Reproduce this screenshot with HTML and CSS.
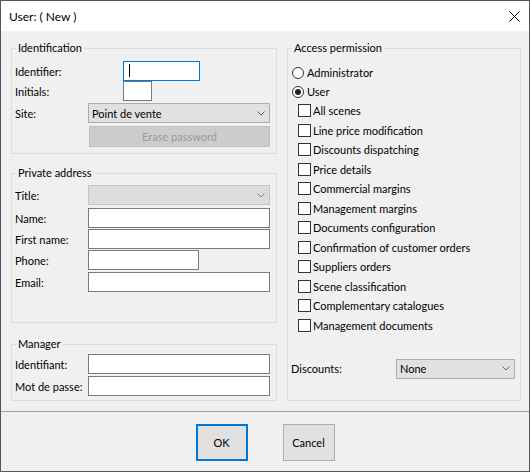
FILE: index.html
```html
<!DOCTYPE html>
<html lang="en">
<head>
<meta charset="utf-8">
<title>User: ( New )</title>
<link rel="stylesheet" href="styles.css">
</head>
<body>
<div class="window">
  <div class="titlebar">
    <span class="title">User: ( New )</span>
    <svg class="close" viewBox="0 0 11 11" aria-label="Close"><path d="M0.5 0.5 L10.5 10.5 M10.5 0.5 L0.5 10.5" stroke="#000" stroke-width="1" fill="none"/></svg>
  </div>

  <div class="content">
    <div class="left-col">
      <fieldset class="group g-ident">
        <legend>Identification</legend>
        <div class="row">
          <span class="lbl">Identifier:</span>
          <div class="textbox focused w-ident indent"><span class="caret"></span></div>
        </div>
        <div class="row">
          <span class="lbl">Initials:</span>
          <div class="textbox w-init indent"></div>
        </div>
        <div class="row mt2">
          <span class="lbl">Site:</span>
          <div class="combo w-full"><span>Point de vente</span><svg class="chev" viewBox="0 0 8 5"><path d="M0.5 0.5 L4 4 L7.5 0.5" stroke="#606060" fill="none"/></svg></div>
        </div>
        <div class="row h21 mt3">
          <div class="btn-disabled">Erase password</div>
        </div>
      </fieldset>

      <fieldset class="group g-addr">
        <legend>Private address</legend>
        <div class="row">
          <span class="lbl">Title:</span>
          <div class="combo disabled w-full"><span></span><svg class="chev" viewBox="0 0 8 5"><path d="M0.5 0.5 L4 4 L7.5 0.5" stroke="#8a8a8a" fill="none"/></svg></div>
        </div>
        <div class="row mt3">
          <span class="lbl">Name:</span>
          <div class="textbox w-full"></div>
        </div>
        <div class="row mt1">
          <span class="lbl">First name:</span>
          <div class="textbox w-full"></div>
        </div>
        <div class="row mt1">
          <span class="lbl">Phone:</span>
          <div class="textbox w-phone"></div>
        </div>
        <div class="row mt2">
          <span class="lbl">Email:</span>
          <div class="textbox w-full"></div>
        </div>
      </fieldset>

      <fieldset class="group g-mgr">
        <legend>Manager</legend>
        <div class="row">
          <span class="lbl">Identifiant:</span>
          <div class="textbox w-full"></div>
        </div>
        <div class="row mt2">
          <span class="lbl">Mot de passe:</span>
          <div class="textbox w-full"></div>
        </div>
      </fieldset>
    </div>

    <fieldset class="group g-access">
      <legend>Access permission</legend>
      <div class="radio-row"><span class="radio"></span><span>Administrator</span></div>
      <div class="radio-row"><span class="radio checked"><span class="dot"></span></span><span>User</span></div>
      <div class="checks">
        <div class="check-row"><span class="check"></span><span>All scenes</span></div>
        <div class="check-row"><span class="check"></span><span>Line price modification</span></div>
        <div class="check-row"><span class="check"></span><span>Discounts dispatching</span></div>
        <div class="check-row"><span class="check"></span><span>Price details</span></div>
        <div class="check-row"><span class="check"></span><span>Commercial margins</span></div>
        <div class="check-row"><span class="check"></span><span>Management margins</span></div>
        <div class="check-row"><span class="check"></span><span>Documents configuration</span></div>
        <div class="check-row"><span class="check"></span><span>Confirmation of customer orders</span></div>
        <div class="check-row"><span class="check"></span><span>Suppliers orders</span></div>
        <div class="check-row"><span class="check"></span><span>Scene classification</span></div>
        <div class="check-row"><span class="check"></span><span>Complementary catalogues</span></div>
        <div class="check-row"><span class="check"></span><span>Management documents</span></div>
      </div>
      <div class="disc-row">
        <span class="disc-lbl">Discounts:</span>
        <div class="combo w-disc"><span>None</span><svg class="chev" viewBox="0 0 8 5"><path d="M0.5 0.5 L4 4 L7.5 0.5" stroke="#606060" fill="none"/></svg></div>
      </div>
    </fieldset>
  </div>

  <div class="footer">
    <div class="btn default">OK</div>
    <div class="btn">Cancel</div>
  </div>
</div>
</body>
</html>
```
FILE: styles.css
```css
* { box-sizing: border-box; }
html, body { margin: 0; padding: 0; }
body {
  width: 530px;
  height: 472px;
  overflow: hidden;
  font-family: Lato, "Liberation Sans", sans-serif;
  font-size: 11px;
  color: #000;
  background: #f0f0f0;
}

.window {
  width: 530px;
  height: 472px;
  border: 1px solid #555;
  background: #f0f0f0;
  display: flex;
  flex-direction: column;
}

.titlebar {
  flex: none;
  height: 30px;
  background: #fff;
  display: flex;
  align-items: center;
  justify-content: space-between;
  padding: 0 9px 0 8px;
}
.title { font-size: 12px; }
.close { width: 11px; height: 11px; display: block; }

.content {
  flex: none;
  display: flex;
  align-items: stretch;
  gap: 10px;
  padding: 10px 0 0 10px;
}

.left-col {
  width: 266px;
  display: flex;
  flex-direction: column;
}

.group {
  margin: 0;
  border: 1px solid #dcdcdc;
  padding: 0 3px;
  min-width: 0;
}
.group legend {
  font-size: 11px;
  line-height: 14px;
  padding: 0 2px;
  margin-left: 1px;
}

.g-ident { padding-top: 6px; padding-bottom: 6px; }
.g-addr { margin-top: 12px; padding-top: 5px; padding-bottom: 30px; }
.g-mgr { margin-top: 14px; padding-top: 3px; padding-bottom: 4px; }
.g-access { width: 234px; padding-top: 8px; }

.row {
  display: flex;
  align-items: center;
  height: 20px;
}
.row.h21 { height: 21px; }
.mt1 { margin-top: 1px; }
.mt2 { margin-top: 2px; }
.mt3 { margin-top: 3px; }

.lbl {
  width: 73px;
  flex: none;
  white-space: nowrap;
}

.textbox {
  height: 20px;
  background: #fff;
  border: 1px solid #7a7a7a;
  flex: none;
  position: relative;
}
.textbox.focused { border-color: #0078d7; }
.caret {
  position: absolute;
  left: 5px;
  top: 2px;
  width: 1px;
  height: 13px;
  background: #000;
}
.indent { margin-left: 35px; }
.w-ident { width: 77px; }
.w-init { width: 29px; }
.w-full { width: 182px; }
.w-phone { width: 111px; }
.w-disc { width: 119px; height: 21px; }

.combo {
  height: 20px;
  background: #e1e1e1;
  border: 1px solid #adadad;
  display: flex;
  align-items: center;
  justify-content: space-between;
  padding: 0 4px 0 3px;
  flex: none;
}
.combo.disabled {
  background: #dcdcdc;
  border-color: #c4c4c4;
}
.chev { width: 8px; height: 5px; display: block; }

.btn-disabled {
  margin-left: 74px;
  width: 181px;
  height: 21px;
  background: #cccccc;
  border: 1px solid #bfbfbf;
  color: #9a9a9a;
  display: flex;
  align-items: center;
  justify-content: center;
}

.radio-row {
  display: flex;
  align-items: center;
  height: 19px;
  padding-left: 1px;
}
.radio {
  width: 12px;
  height: 12px;
  border: 1px solid #333;
  border-radius: 50%;
  background: #fff;
  margin-right: 3px;
  display: flex;
  align-items: center;
  justify-content: center;
  flex: none;
}
.dot {
  width: 6px;
  height: 6px;
  border-radius: 50%;
  background: #222;
}

.check-row {
  display: flex;
  align-items: center;
  height: 19.5px;
  padding-left: 7px;
}
.check {
  width: 13px;
  height: 13px;
  border: 1px solid #333;
  background: #fff;
  margin-right: 2px;
  flex: none;
}

.disc-row {
  display: flex;
  align-items: center;
  margin-top: 23px;
  height: 21px;
}
.disc-lbl { width: 105px; flex: none; }

.footer {
  flex: 1;
  margin-top: 10px;
  border-top: 1px solid #a0a0a0;
  padding-top: 12px;
  display: flex;
  justify-content: center;
  align-items: flex-start;
  gap: 35px;
}
.btn {
  width: 52px;
  height: 37px;
  background: #e1e1e1;
  border: 1px solid #adadad;
  display: flex;
  align-items: center;
  justify-content: center;
}
.btn.default { border: 2px solid #0078d7; }
```
